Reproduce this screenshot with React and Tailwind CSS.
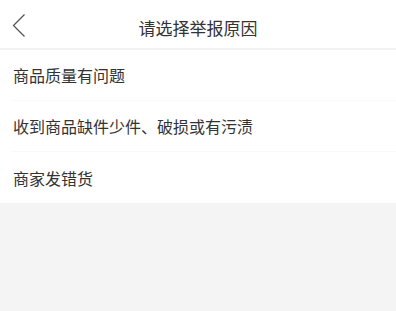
export default function App() {
  const items = ["商品质量有问题", "收到商品缺件少件、破损或有污渍", "商家发错货"];
  return (
    <div
      className="w-[396px] h-[311px] bg-[#f4f4f4] text-[#333333]"
      style={{ fontFamily: '"Noto Sans CJK SC", "Noto Sans", sans-serif' }}
    >
      <div className="bg-white">
        <div className="relative h-[50px] flex items-center justify-center border-b-2 border-[#f2f2f2]">
          <button className="absolute left-[10px] top-[12px] w-[18px] h-[28px] flex items-center justify-center">
            <svg width="14" height="26" viewBox="0 0 14 26" fill="none">
              <path d="M12.5 1.5 L1.5 12.5 L12.5 23.5" stroke="#555555" strokeWidth="1.3" />
            </svg>
          </button>
          <span className="text-[17px] leading-none pt-[6px]">请选择举报原因</span>
        </div>
        {items.map((t, i) => (
          <div key={i} className="pl-[13px]">
            <div
              className={`h-[51px] flex items-center text-[16px] leading-none ${
                i < items.length - 1 ? "border-b border-[#f8f8f8]" : ""
              }`}
            >
              {t}
            </div>
          </div>
        ))}
      </div>
    </div>
  );
}
